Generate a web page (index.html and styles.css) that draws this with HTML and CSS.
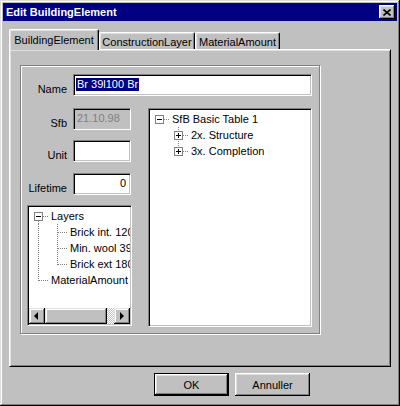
FILE: index.html
```html
<!DOCTYPE html>
<html>
<head>
<meta charset="utf-8">
<link rel="stylesheet" href="styles.css">
</head>
<body>
<div class="window">
  <div class="titlebar">
    <span class="title">Edit BuildingElement</span>
    <div class="close">
      <svg width="8" height="7" viewBox="0 0 8 7"><path d="M0.5 0.5L7.5 6.5M7.5 0.5L0.5 6.5" stroke="#000" stroke-width="1.6"/></svg>
    </div>
  </div>
  <div class="content">
    <div class="tabs">
      <div class="tab sel t1">BuildingElement</div>
      <div class="tab t2">ConstructionLayer</div>
      <div class="tab t3">MaterialAmount</div>
    </div>
    <div class="panel">
      <div class="group">
        <div class="frow namerow">
          <span class="lbl">Name</span>
          <div class="edit wide"><span class="hl">Br 39l100 Br</span></div>
        </div>
        <div class="main">
          <div class="leftcol">
            <div class="frow r-sfb">
              <span class="lbl">Sfb</span>
              <div class="edit small disabled">21.10.98</div>
            </div>
            <div class="frow r-unit">
              <span class="lbl">Unit</span>
              <div class="edit small"></div>
            </div>
            <div class="frow r-life">
              <span class="lbl">Lifetime</span>
              <div class="edit small right">0</div>
            </div>
            <div class="tree ltree">
              <div class="view">
                <div class="row">
                  <svg class="cell" width="19" height="16"><g stroke="#808080" stroke-dasharray="1 1" shape-rendering="crispEdges"><line x1="10" y1="8.5" x2="19" y2="8.5"/><line x1="9.5" y1="9" x2="9.5" y2="16"/></g><g shape-rendering="crispEdges"><rect x="5.5" y="4.5" width="8" height="8" fill="#fff" stroke="#808080"/><line x1="7" y1="8.5" x2="12" y2="8.5" stroke="#000"/></g></svg>
                  <span class="txt">Layers</span>
                </div>
                <div class="row">
                  <svg class="cell" width="19" height="16"><g stroke="#808080" stroke-dasharray="1 1" shape-rendering="crispEdges"><line x1="9.5" y1="0" x2="9.5" y2="16"/></g></svg>
                  <svg class="cell" width="19" height="16"><g stroke="#808080" stroke-dasharray="1 1" shape-rendering="crispEdges"><line x1="9.5" y1="0" x2="9.5" y2="16"/><line x1="10" y1="8.5" x2="19" y2="8.5"/></g></svg>
                  <span class="txt">Brick int. 120</span>
                </div>
                <div class="row">
                  <svg class="cell" width="19" height="16"><g stroke="#808080" stroke-dasharray="1 1" shape-rendering="crispEdges"><line x1="9.5" y1="0" x2="9.5" y2="16"/></g></svg>
                  <svg class="cell" width="19" height="16"><g stroke="#808080" stroke-dasharray="1 1" shape-rendering="crispEdges"><line x1="9.5" y1="0" x2="9.5" y2="16"/><line x1="10" y1="8.5" x2="19" y2="8.5"/></g></svg>
                  <span class="txt">Min. wool 39</span>
                </div>
                <div class="row">
                  <svg class="cell" width="19" height="16"><g stroke="#808080" stroke-dasharray="1 1" shape-rendering="crispEdges"><line x1="9.5" y1="0" x2="9.5" y2="16"/></g></svg>
                  <svg class="cell" width="19" height="16"><g stroke="#808080" stroke-dasharray="1 1" shape-rendering="crispEdges"><line x1="9.5" y1="0" x2="9.5" y2="9"/><line x1="10" y1="8.5" x2="19" y2="8.5"/></g></svg>
                  <span class="txt">Brick ext 180</span>
                </div>
                <div class="row">
                  <svg class="cell" width="19" height="16"><g stroke="#808080" stroke-dasharray="1 1" shape-rendering="crispEdges"><line x1="9.5" y1="0" x2="9.5" y2="9"/><line x1="10" y1="8.5" x2="19" y2="8.5"/></g></svg>
                  <span class="txt">MaterialAmount</span>
                </div>
              </div>
              <div class="hscroll">
                <div class="sbtn"><svg width="16" height="16"><path d="M9 4V12L5 8Z" fill="#000"/></svg></div>
                <div class="thumb"></div>
                <div class="track"></div>
                <div class="sbtn"><svg width="16" height="16"><path d="M6 4V12L10 8Z" fill="#000"/></svg></div>
              </div>
            </div>
          </div>
          <div class="tree rtree">
            <div class="view">
              <div class="row">
                <svg class="cell" width="19" height="16"><g stroke="#808080" stroke-dasharray="1 1" shape-rendering="crispEdges"><line x1="10" y1="8.5" x2="19" y2="8.5"/></g><g shape-rendering="crispEdges"><rect x="5.5" y="4.5" width="8" height="8" fill="#fff" stroke="#808080"/><line x1="7" y1="8.5" x2="12" y2="8.5" stroke="#000"/></g></svg>
                <span class="txt">SfB Basic Table 1</span>
              </div>
              <div class="row">
                <svg class="cell" width="19" height="16"></svg>
                <svg class="cell" width="19" height="16"><g stroke="#808080" stroke-dasharray="1 1" shape-rendering="crispEdges"><line x1="9.5" y1="0" x2="9.5" y2="16"/><line x1="10" y1="8.5" x2="19" y2="8.5"/></g><g shape-rendering="crispEdges"><rect x="5.5" y="4.5" width="8" height="8" fill="#fff" stroke="#808080"/><line x1="7" y1="8.5" x2="12" y2="8.5" stroke="#000"/><line x1="9.5" y1="6" x2="9.5" y2="11" stroke="#000"/></g></svg>
                <span class="txt">2x. Structure</span>
              </div>
              <div class="row">
                <svg class="cell" width="19" height="16"></svg>
                <svg class="cell" width="19" height="16"><g stroke="#808080" stroke-dasharray="1 1" shape-rendering="crispEdges"><line x1="9.5" y1="0" x2="9.5" y2="9"/><line x1="10" y1="8.5" x2="19" y2="8.5"/></g><g shape-rendering="crispEdges"><rect x="5.5" y="4.5" width="8" height="8" fill="#fff" stroke="#808080"/><line x1="7" y1="8.5" x2="12" y2="8.5" stroke="#000"/><line x1="9.5" y1="6" x2="9.5" y2="11" stroke="#000"/></g></svg>
                <span class="txt">3x. Completion</span>
              </div>
            </div>
          </div>
        </div>
      </div>
    </div>
    <div class="buttons">
      <div class="btn default">OK</div>
      <div class="btn">Annuller</div>
    </div>
  </div>
</div>
</body>
</html>
```
FILE: styles.css
```css
html, body {
  margin: 0;
  padding: 0;
  background: #c0c0c0;
}
body {
  font-family: "Liberation Sans", Arial, sans-serif;
  font-size: 11px;
  color: #000;
}
.window {
  width: 400px;
  height: 406px;
  box-sizing: border-box;
  padding: 3px;
  background: #c0c0c0;
  box-shadow: inset -1px -1px #000, inset 1px 1px #dfdfdf, inset -2px -2px #808080, inset 2px 2px #fff;
}
.titlebar {
  height: 18px;
  background: #000080;
  display: flex;
  align-items: center;
  justify-content: space-between;
  padding-left: 3px;
  padding-right: 2px;
}
.title {
  color: #fff;
  font-weight: bold;
  font-size: 11px;
}
.close {
  width: 16px;
  height: 14px;
  box-sizing: border-box;
  background: #c0c0c0;
  display: flex;
  align-items: center;
  justify-content: center;
  box-shadow: inset -1px -1px #000, inset 1px 1px #fff, inset -2px -2px #808080, inset 2px 2px #dfdfdf;
}
.content {
  padding: 8px 5px 0 6px;
}
.tabs {
  display: flex;
  align-items: flex-end;
  height: 20px;
}
.tab {
  box-sizing: border-box;
  height: 17px;
  display: flex;
  align-items: center;
  justify-content: center;
  background: #c0c0c0;
  border-top: 1px solid #fff;
  border-left: 1px solid #fff;
  border-right: 1px solid #000;
  border-radius: 2px 2px 0 0;
  box-shadow: inset -1px 0 #808080, inset 1px 1px #dfdfdf;
  white-space: nowrap;
  padding-top: 1px;
}
.tab.sel {
  height: 21px;
  margin-bottom: -1px;
  position: relative;
  z-index: 1;
  padding-top: 0;
}
.t1 { width: 90px; }
.t2 { width: 96px; }
.t3 { width: 85px; }
.panel {
  width: 382px;
  height: 318px;
  box-sizing: border-box;
  border: 1px solid;
  border-color: #fff #000 #000 #fff;
  box-shadow: inset 1px 1px #dfdfdf, inset -1px -1px #808080;
  padding: 15px 10px;
}
.group {
  width: 300px;
  height: 269px;
  box-sizing: border-box;
  border: 1px solid #808080;
  box-shadow: inset 1px 1px #fff, 1px 1px #fff;
  padding: 8px 0 0 6px;
}
.frow {
  display: flex;
  align-items: center;
  gap: 6px;
  height: 22px;
}
.lbl {
  width: 40px;
  text-align: right;
  align-self: flex-end;
  line-height: 13px;
  margin-bottom: 0;
}
.edit {
  box-sizing: border-box;
  height: 22px;
  background: #fff;
  border: 1px solid;
  border-color: #808080 #fff #fff #808080;
  box-shadow: inset 1px 1px #000, inset -1px -1px #c0c0c0;
  padding: 2px 3px 0 2px;
  white-space: nowrap;
  overflow: hidden;
  line-height: 14px;
}
.wide { width: 239px; }
.small { width: 58px; }
.disabled {
  background: #c0c0c0;
  color: #808080;
  padding-left: 3px;
}
.right { text-align: right; padding-right: 4px; }
.hl {
  background: #000080;
  color: #fff;
  display: inline-block;
  padding: 0 1px;
  line-height: 13px;
}
.main {
  display: flex;
  gap: 16px;
  margin-top: 12px;
}
.leftcol {
  width: 105px;
  display: flex;
  flex-direction: column;
}
.r-unit { margin-top: 10px; }
.r-life { margin-top: 11px; }
.tree {
  box-sizing: border-box;
  background: #fff;
  border: 1px solid;
  border-color: #808080 #fff #fff #808080;
  box-shadow: inset 1px 1px #000, inset -1px -1px #c0c0c0;
  padding: 1px;
  display: flex;
  flex-direction: column;
}
.ltree {
  margin-top: 10px;
  height: 121px;
}
.rtree {
  width: 164px;
  height: 219px;
}
.view {
  flex: 1;
  overflow: hidden;
  padding-top: 1px;
}
.row {
  display: flex;
  align-items: center;
  height: 16px;
  white-space: nowrap;
}
.cell {
  display: block;
  flex: none;
}
.txt {
  padding-left: 3px;
  line-height: 16px;
}
.hscroll {
  display: flex;
  height: 16px;
  flex: none;
}
.sbtn {
  width: 16px;
  height: 16px;
  flex: none;
  box-sizing: border-box;
  background: #c0c0c0;
  box-shadow: inset -1px -1px #000, inset 1px 1px #dfdfdf, inset -2px -2px #808080, inset 2px 2px #fff;
}
.sbtn svg { display: block; }
.thumb {
  width: 62px;
  flex: none;
  background: #c0c0c0;
  box-shadow: inset -1px -1px #000, inset 1px 1px #dfdfdf, inset -2px -2px #808080, inset 2px 2px #fff;
}
.track {
  flex: 1;
  background: repeating-conic-gradient(#fff 0 25%, #c0c0c0 0 50%) 0 0 / 2px 2px;
}
.buttons {
  display: flex;
  gap: 6px;
  margin-top: 6px;
  margin-left: 145px;
}
.btn {
  width: 75px;
  height: 23px;
  box-sizing: border-box;
  display: flex;
  align-items: center;
  justify-content: center;
  background: #c0c0c0;
  box-shadow: inset -1px -1px #000, inset 1px 1px #fff, inset -2px -2px #808080, inset 2px 2px #dfdfdf;
}
.btn.default {
  border: 1px solid #000;
  box-shadow: inset -1px -1px #000, inset 1px 1px #fff, inset -2px -2px #808080, inset 2px 2px #dfdfdf;
}
```
